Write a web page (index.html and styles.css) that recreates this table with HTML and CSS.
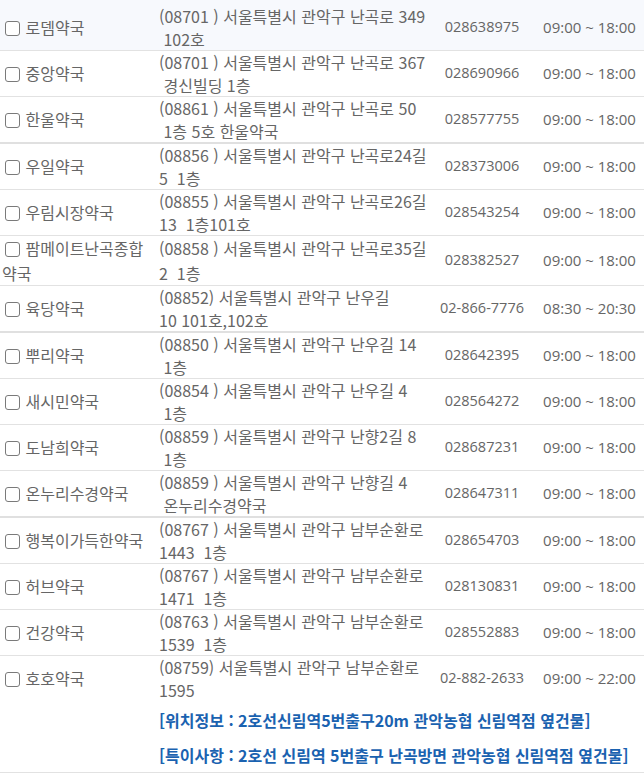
FILE: index.html
```html
<!DOCTYPE html>
<html lang="ko">
<head>
    <meta charset="UTF-8">
    <title>약국 목록</title>
    <link rel="stylesheet" href="styles.css">
</head>
<body>
    <table class="pharmacy-table">
        <colgroup>
            <col class="col-name">
            <col class="col-addr">
            <col class="col-tel">
            <col class="col-time">
        </colgroup>
        <tbody>
            <tr class="first">
                <td class="name"><input type="checkbox"> 로뎀약국</td>
                <td class="addr">(08701 ) 서울특별시 관악구 난곡로 349<br>&nbsp;102호</td>
                <td class="tel">028638975</td>
                <td class="time">09:00 ~ 18:00</td>
            </tr>
            <tr>
                <td class="name"><input type="checkbox"> 중앙약국</td>
                <td class="addr">(08701 ) 서울특별시 관악구 난곡로 367<br>&nbsp;경신빌딩 1층</td>
                <td class="tel">028690966</td>
                <td class="time">09:00 ~ 18:00</td>
            </tr>
            <tr class="thick">
                <td class="name"><input type="checkbox"> 한울약국</td>
                <td class="addr">(08861 ) 서울특별시 관악구 난곡로 50<br>&nbsp;1층 5호 한울약국</td>
                <td class="tel">028577755</td>
                <td class="time">09:00 ~ 18:00</td>
            </tr>
            <tr>
                <td class="name"><input type="checkbox"> 우일약국</td>
                <td class="addr">(08856 ) 서울특별시 관악구 난곡로24길<br>5&nbsp; 1층</td>
                <td class="tel">028373006</td>
                <td class="time">09:00 ~ 18:00</td>
            </tr>
            <tr>
                <td class="name"><input type="checkbox"> 우림시장약국</td>
                <td class="addr">(08855 ) 서울특별시 관악구 난곡로26길<br>13&nbsp; 1층101호</td>
                <td class="tel">028543254</td>
                <td class="time">09:00 ~ 18:00</td>
            </tr>
            <tr class="tall">
                <td class="name"><input type="checkbox"> 팜메이트난곡종합<br>약국</td>
                <td class="addr">(08858 ) 서울특별시 관악구 난곡로35길<br>2&nbsp; 1층</td>
                <td class="tel">028382527</td>
                <td class="time">09:00 ~ 18:00</td>
            </tr>
            <tr class="thick">
                <td class="name"><input type="checkbox"> 육당약국</td>
                <td class="addr">(08852) 서울특별시 관악구 난우길<br>10 101호,102호</td>
                <td class="tel">02-866-7776</td>
                <td class="time">08:30 ~ 20:30</td>
            </tr>
            <tr>
                <td class="name"><input type="checkbox"> 뿌리약국</td>
                <td class="addr">(08850 ) 서울특별시 관악구 난우길 14<br>&nbsp;1층</td>
                <td class="tel">028642395</td>
                <td class="time">09:00 ~ 18:00</td>
            </tr>
            <tr>
                <td class="name"><input type="checkbox"> 새시민약국</td>
                <td class="addr">(08854 ) 서울특별시 관악구 난우길 4<br>&nbsp;1층</td>
                <td class="tel">028564272</td>
                <td class="time">09:00 ~ 18:00</td>
            </tr>
            <tr>
                <td class="name"><input type="checkbox"> 도남희약국</td>
                <td class="addr">(08859 ) 서울특별시 관악구 난향2길 8<br>&nbsp;1층</td>
                <td class="tel">028687231</td>
                <td class="time">09:00 ~ 18:00</td>
            </tr>
            <tr class="thick">
                <td class="name"><input type="checkbox"> 온누리수경약국</td>
                <td class="addr">(08859 ) 서울특별시 관악구 난향길 4<br>&nbsp;온누리수경약국</td>
                <td class="tel">028647311</td>
                <td class="time">09:00 ~ 18:00</td>
            </tr>
            <tr>
                <td class="name"><input type="checkbox"> 행복이가득한약국</td>
                <td class="addr">(08767 ) 서울특별시 관악구 남부순환로<br>1443&nbsp; 1층</td>
                <td class="tel">028654703</td>
                <td class="time">09:00 ~ 18:00</td>
            </tr>
            <tr>
                <td class="name"><input type="checkbox"> 허브약국</td>
                <td class="addr">(08767 ) 서울특별시 관악구 남부순환로<br>1471&nbsp; 1층</td>
                <td class="tel">028130831</td>
                <td class="time">09:00 ~ 18:00</td>
            </tr>
            <tr>
                <td class="name"><input type="checkbox"> 건강약국</td>
                <td class="addr">(08763 ) 서울특별시 관악구 남부순환로<br>1539&nbsp; 1층</td>
                <td class="tel">028552883</td>
                <td class="time">09:00 ~ 18:00</td>
            </tr>
            <tr class="no-line">
                <td class="name"><input type="checkbox"> 호호약국</td>
                <td class="addr">(08759) 서울특별시 관악구 남부순환로<br>1595</td>
                <td class="tel">02-882-2633</td>
                <td class="time">09:00 ~ 22:00</td>
            </tr>
            <tr class="notes-row">
                <td></td>
                <td class="notes" colspan="3">
                    <p>[위치정보 : 2호선신림역5번출구20m 관악농협 신림역점 옆건물]</p>
                    <p>[특이사항 : 2호선 신림역 5번출구 난곡방면 관악농협 신림역점 옆건물]</p>
                </td>
            </tr>
        </tbody>
    </table>
</body>
</html>
```

FILE: styles.css
```css
body {
    margin: 0;
    background: #fff;
    font-family: 'Noto Sans CJK KR', 'Noto Sans', sans-serif;
    font-size: 16px;
    color: #666;
}
.pharmacy-table {
    width: 644px;
    border-collapse: collapse;
    table-layout: fixed;
}
.col-name {
    width: 155px;
}
.col-addr {
    width: 274px;
}
.col-tel {
    width: 106px;
}
.col-time {
    width: 109px;
}
.pharmacy-table td {
    padding: 0;
    line-height: 22.5px;
    vertical-align: middle;
    white-space: nowrap;
}
.pharmacy-table tr {
    border-bottom: 1px solid #e2e2e2;
}
.pharmacy-table tr.thick {
    border-bottom: 2px solid #e0e0e0;
}
.pharmacy-table tr.no-line {
    border-bottom: none;
}
.pharmacy-table tr.first td {
    background: #f7f9fd;
    padding-top: 5px;
}
.pharmacy-table tr.tall td {
    line-height: 24.5px;
}
.name {
    padding-left: 2px !important;
}
.name input {
    appearance: none;
    -webkit-appearance: none;
    box-sizing: border-box;
    width: 15px;
    height: 15px;
    margin: 0 1px 0 3px;
    border: 1.5px solid #7a7a7a;
    border-radius: 3px;
    background: #fff;
    vertical-align: -2px;
}
.addr {
    padding-left: 4px !important;
}
.tel, .time {
    text-align: center;
    font-family: 'Open Sans', 'Noto Sans CJK KR', sans-serif;
}
.tel {
    font-size: 14.5px;
}
.time {
    font-size: 15px;
}
.notes {
    padding: 8px 0 6px 4px !important;
}
.notes p {
    margin: 0;
    color: #1a62b0;
    font-weight: 700;
    line-height: 22.5px;
}
.notes p + p {
    margin-top: 12px;
}
```
